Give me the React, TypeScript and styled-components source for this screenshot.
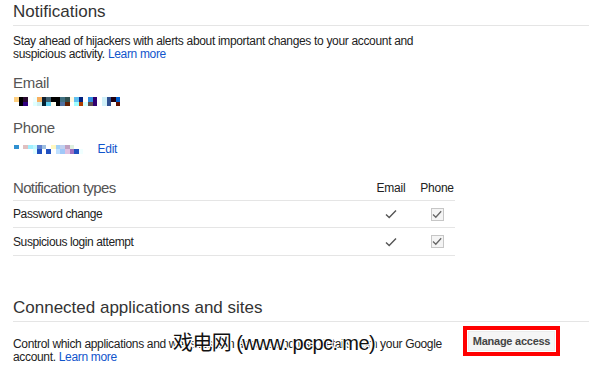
import React from "react";
import styled, { createGlobalStyle } from "styled-components";

const Global = createGlobalStyle`
  html, body { margin: 0; padding: 0; background: #fff; }
  body { font-family: "Liberation Sans", Arial, sans-serif; color: #222; }
`;

const Page = styled.div`
  position: relative;
  width: 590px;
  height: 368px;
  overflow: hidden;
  padding: 2px 1px 0 13px;
  box-sizing: border-box;
`;

const Heading = styled.h2<{ $top?: number }>`
  margin: ${(p) => p.$top ?? 0}px 0 0;
  font-size: 17px;
  line-height: 20px;
  font-weight: normal;
  color: #333;
`;

const Divider = styled.div<{ $top: number }>`
  height: 1px;
  background: #e5e5e5;
  margin-top: ${(p) => p.$top}px;
`;

const Para = styled.p<{ $top: number }>`
  margin: ${(p) => p.$top}px 0 0;
  font-size: 12px;
  line-height: 13px;
  letter-spacing: -0.33px;
  color: #222;
`;

const Link = styled.a`
  color: #15c;
  text-decoration: none;
`;

const Label = styled.div<{ $top: number }>`
  margin-top: ${(p) => p.$top}px;
  font-size: 15px;
  line-height: 16px;
  letter-spacing: -0.3px;
  color: #555;
`;

const PixelRow = styled.div<{ $top: number }>`
  display: flex;
  align-items: center;
  gap: 14px;
  margin-top: ${(p) => p.$top}px;
  padding-left: 1px;
`;

const PixelGrid = styled.div<{ $cols: number }>`
  display: grid;
  grid-template-columns: repeat(${(p) => p.$cols}, 4.64px);
  grid-auto-rows: 4.6px;
`;

const Pixel = styled.span<{ $c: string }>`
  background: ${(p) => p.$c};
`;

const EditLink = styled(Link)`
  font-size: 12px;
  line-height: 14px;
  letter-spacing: -0.2px;
`;

const Table = styled.div`
  margin-top: 19px;
  width: 442px;
`;

const TRow = styled.div<{ $h: number }>`
  display: grid;
  grid-template-columns: 1fr 46px 36px;
  column-gap: 5px;
  align-items: center;
  height: ${(p) => p.$h}px;
  border-bottom: 1px solid #e5e5e5;
`;

const HeadCell = styled.div`
  font-size: 15px;
  letter-spacing: -0.65px;
  color: #555;
`;

const ColHead = styled.div`
  font-size: 12px;
  letter-spacing: -0.2px;
  color: #222;
  text-align: center;
`;

const Cell = styled.div`
  font-size: 12px;
  letter-spacing: -0.4px;
  color: #222;
`;

const IconCell = styled.div`
  display: flex;
  justify-content: center;
  align-items: center;
`;

const CheckBox = styled.span`
  width: 11px;
  height: 11px;
  border: 1px solid #c6c6c6;
  background: #f4f4f4;
  display: flex;
  align-items: center;
  justify-content: center;
`;

const ConnectRow = styled.div`
  display: flex;
  align-items: flex-start;
  justify-content: space-between;
  margin-top: 4px;
  padding-right: 29px;
`;

const ConnectPara = styled(Para)`
  width: 440px;
  flex: none;
  white-space: nowrap;
`;

const Highlight = styled.div`
  width: 97px;
  height: 30px;
  box-sizing: border-box;
  border: 4px solid #f00;
  padding: 1px;
  display: flex;
`;

const Button = styled.button`
  flex: 1;
  font-family: "Liberation Sans", Arial, sans-serif;
  font-size: 11px;
  font-weight: bold;
  letter-spacing: -0.25px;
  white-space: nowrap;
  color: #444;
  background: #f5f5f5;
  border: 1px solid #ececec;
  padding: 0;
  border-radius: 0;
`;

const Watermark = styled.div`
  position: absolute;
  left: 173px;
  top: 328px;
  font-family: "Liberation Sans", "Noto Sans CJK SC", sans-serif;
  font-size: 20px;
  line-height: 30px;
  color: #111;
  letter-spacing: -0.6px;
  text-shadow: 1px 0 #fff, -1px 0 #fff, 0 1px #fff, 0 -1px #fff, 1px 1px #fff, -1px -1px #fff, 1px -1px #fff, -1px 1px #fff;
  white-space: nowrap;
`;

const Check = () => (
  <svg width="12" height="10" viewBox="0 0 12 10">
    <path d="M1 5.5 L4.2 8.5 L11 1.5" fill="none" stroke="#555" strokeWidth="1.4" />
  </svg>
);

const SmallCheck = () => (
  <svg width="10" height="9" viewBox="0 0 10 9">
    <path d="M1 4.5 L3.8 7.2 L9.2 1.2" fill="none" stroke="#666" strokeWidth="1.3" />
  </svg>
);

const W = "#fff";
const emailTop = ["#ffd080", "#000", "#2a0a30", W, "#f0ffff", "#f8b060", "#102030", "#406070", "#000", "#000", "#407080", "#305050", "#fff8e0", "#60c0f0", "#002080", W, "#3090e0", "#300070", W, "#d0f0f8", "#305090", "#200010", "#0060d0", W, W];
const emailBot = [W, "#000", "#300080", W, "#e0ffff", "#d0f0f0", "#002030", "#60d0f0", "#fffff0", "#000", "#5070a0", "#602000", W, "#a0ffff", "#b04000", "#d0ffff", "#605050", "#300070", W, "#d0f0f8", "#305090", W, "#601000", W, W];
const phoneTop = ["#3090d0", W, "#e0c0c0", "#a0f0ff", "#c0f8ff", "#6080d0", "#a0c0e0", W, "#fff8c0", "#a0d0f8", "#c0d0f0", "#c0a0c0", "#e0f0e0", W, W];
const phoneBot = [W, W, W, W, "#e0ffff", "#2050c0", W, "#2050c0", W, "#c0e0ff", "#a0c8f8", "#e0c0e0", "#a070c0", "#2050c0", "#f0ffff"];

const Pixels = ({ rows }: { rows: string[][] }) => (
  <PixelGrid $cols={rows[0].length}>
    {rows.map((r, i) => r.map((c, j) => <Pixel key={`${i}-${j}`} $c={c} />))}
  </PixelGrid>
);

export default function App() {
  return (
    <>
      <Global />
      <Page>
        <Heading>Notifications</Heading>
        <Divider $top={3} />
        <Para $top={9}>
          Stay ahead of hijackers with alerts about important changes to your account and
          <br />
          suspicious activity. <Link href="#">Learn more</Link>
        </Para>

        <Label $top={14}>Email</Label>
        <PixelRow $top={6}>
          <Pixels rows={[emailTop, emailBot]} />
        </PixelRow>

        <Label $top={14}>Phone</Label>
        <PixelRow $top={6}>
          <Pixels rows={[phoneTop, phoneBot]} />
          <EditLink href="#">Edit</EditLink>
        </PixelRow>

        <Table>
          <TRow $h={25}>
            <HeadCell>Notification types</HeadCell>
            <ColHead>Email</ColHead>
            <ColHead>Phone</ColHead>
          </TRow>
          <TRow $h={26}>
            <Cell>Password change</Cell>
            <IconCell><Check /></IconCell>
            <IconCell><CheckBox><SmallCheck /></CheckBox></IconCell>
          </TRow>
          <TRow $h={27}>
            <Cell>Suspicious login attempt</Cell>
            <IconCell><Check /></IconCell>
            <IconCell><CheckBox><SmallCheck /></CheckBox></IconCell>
          </TRow>
        </Table>

        <Heading $top={42}>Connected applications and sites</Heading>
        <Divider $top={3} />
        <ConnectRow>
          <ConnectPara $top={12}>
            Control which applications and websites can access and use details from your Google
            <br />
            account. <Link href="#">Learn more</Link>
          </ConnectPara>
          <Highlight>
            <Button>Manage access</Button>
          </Highlight>
        </ConnectRow>
        <Watermark>戏电网 (www. pcpc. me)</Watermark>
      </Page>
    </>
  );
}
